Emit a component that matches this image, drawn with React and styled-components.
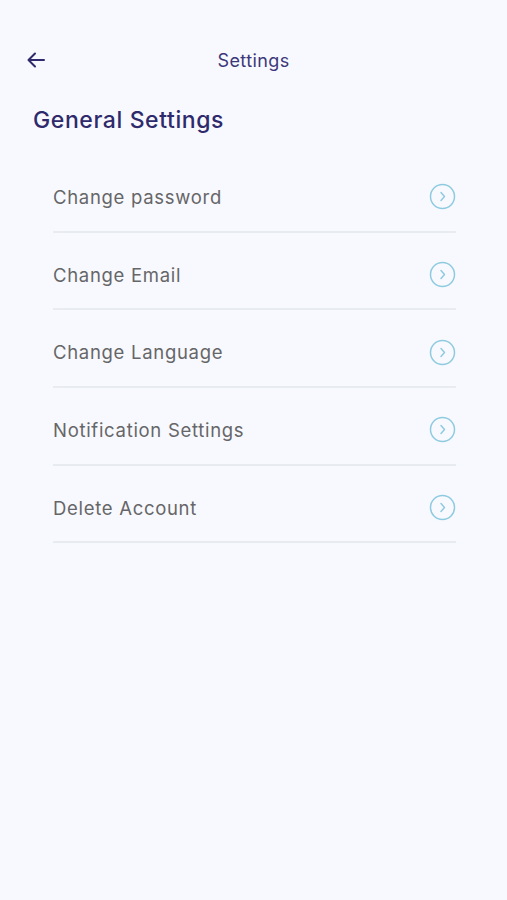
import React from "react";
import styled, { createGlobalStyle } from "styled-components";

const Global = createGlobalStyle`
  html, body { margin: 0; padding: 0; background: #f8f9fe; }
  body { font-family: Inter, "Noto Sans", sans-serif; -webkit-font-smoothing: antialiased; }
`;

const Page = styled.div`
  width: 507px;
  min-height: 900px;
  background: #f8f9fe;
  box-sizing: border-box;
  padding-top: 44px;
`;

const Header = styled.div`
  position: relative;
  height: 32px;
  display: flex;
  align-items: center;
  justify-content: center;
`;

const BackButton = styled.button`
  position: absolute;
  left: 24px;
  top: 4px;
  width: 24px;
  height: 24px;
  padding: 0;
  border: 0;
  background: none;
  display: flex;
  align-items: center;
  justify-content: center;
`;

const Title = styled.div`
  font-size: 18px;
  color: #3c3779;
  letter-spacing: 0.4px;
`;

const SectionTitle = styled.h2`
  margin: 30px 0 0 33px;
  font-size: 23px;
  font-weight: 500;
  color: #2e2a6c;
  letter-spacing: 0.6px;
`;

const List = styled.ul`
  list-style: none;
  margin: 21px 51px 0 53px;
  padding: 0;
`;

const Row = styled.li`
  height: 77.7px;
  box-sizing: border-box;
  display: flex;
  align-items: center;
  justify-content: space-between;
  border-bottom: 2px solid #e8ebf0;
  padding-top: 8px;
`;

const Label = styled.span`
  font-size: 18.5px;
  color: #666668;
  letter-spacing: 0.7px;
`;

const Chevron = () => (
  <svg width="27" height="27" viewBox="0 0 27 27" fill="none">
    <circle cx="13.5" cy="13.5" r="12" stroke="#8fcbe0" strokeWidth="1.5" />
    <path d="M12 9.5 L15.5 13.5 L12 17.5" stroke="#8fcbe0" strokeWidth="1.5" strokeLinecap="round" strokeLinejoin="round" />
  </svg>
);

const items = [
  "Change password",
  "Change Email",
  "Change Language",
  "Notification Settings",
  "Delete Account",
];

export default function App() {
  return (
    <>
      <Global />
      <Page>
        <Header>
          <BackButton aria-label="Back">
            <svg width="22" height="22" viewBox="0 0 22 22" fill="none">
              <path d="M19 11 H4 M10 4.5 L3.5 11 L10 17.5" stroke="#2e2a6c" strokeWidth="2" strokeLinecap="round" strokeLinejoin="round" />
            </svg>
          </BackButton>
          <Title>Settings</Title>
        </Header>
        <SectionTitle>General Settings</SectionTitle>
        <List>
          {items.map((t) => (
            <Row key={t}>
              <Label>{t}</Label>
              <Chevron />
            </Row>
          ))}
        </List>
      </Page>
    </>
  );
}
